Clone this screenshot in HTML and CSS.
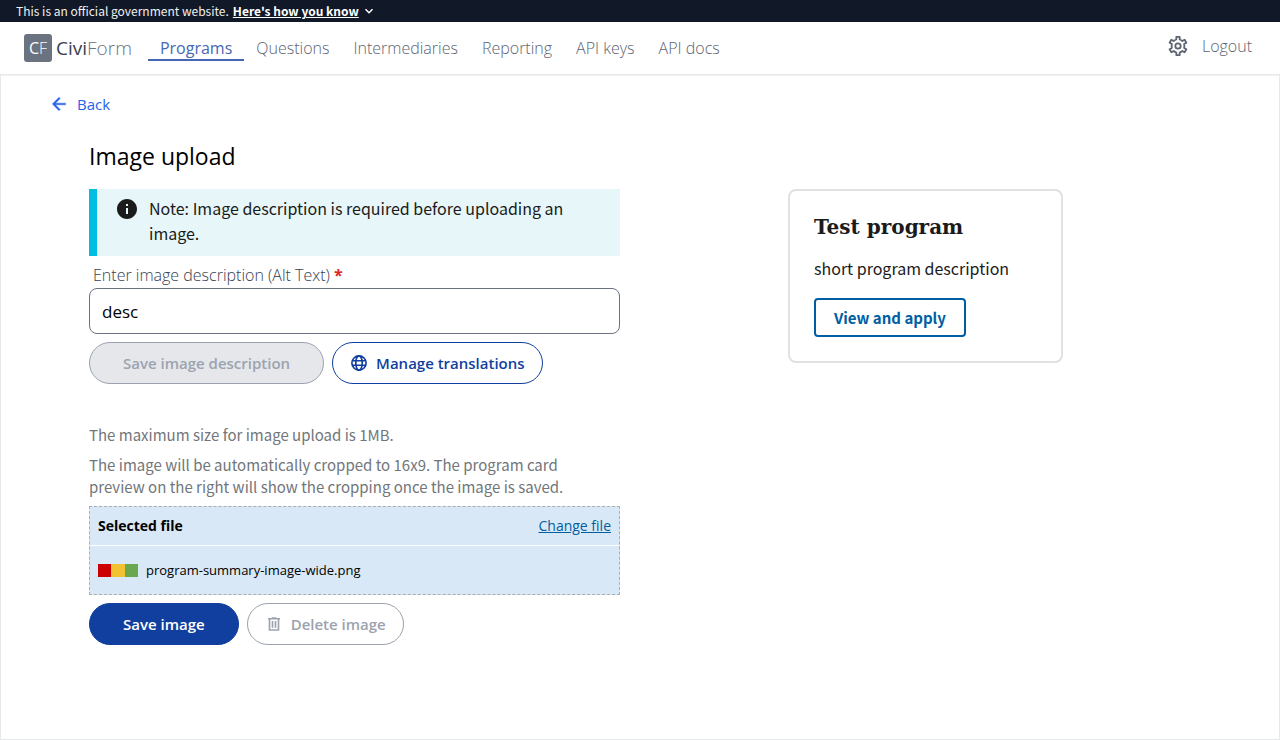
FILE: index.html
```html
<!DOCTYPE html>
<html lang="en">
<head>
<meta charset="utf-8">
<title>Image upload - CiviForm</title>
<link rel="stylesheet" href="styles.css">
</head>
<body>
<div class="gov-banner">
  <span>This is an official government website.</span>
  <button type="button" class="gov-toggle"><span class="gov-toggle-text">Here's how you know</span>
    <svg width="10" height="10" viewBox="0 0 10 10" fill="none" stroke="currentColor" stroke-width="1.500" aria-hidden="true"><path d="M1.500 3.200 5 6.700 8.500 3.200"/></svg>
  </button>
</div>
<header class="site-header">
  <a href="#" class="brand"><span class="brand-mark">C<span class="brand-mark-f">F</span></span><span class="brand-name">Civi<span class="brand-thin">Form</span></span></a>
  <nav class="nav">
    <a href="#" class="nav-link nav-link-current">Programs</a>
    <a href="#" class="nav-link">Questions</a>
    <a href="#" class="nav-link">Intermediaries</a>
    <a href="#" class="nav-link">Reporting</a>
    <a href="#" class="nav-link">API keys</a>
    <a href="#" class="nav-link">API docs</a>
  </nav>
  <div class="account">
    <a href="#" class="settings" aria-label="Settings">
      <svg width="24" height="24" viewBox="0 0 24 24" fill="none" stroke="currentColor" stroke-width="1.800" stroke-linejoin="round" aria-hidden="true"><path d="M10.300 2.900h3.400v2.600a7 7 0 0 1 2.600 1.500l2.300-1.300 1.800 3-2.300 1.300a7 7 0 0 1 0 4l2.300 1.300-1.800 3-2.300-1.300a7 7 0 0 1-2.600 1.500v2.600h-3.400v-2.600A7 7 0 0 1 7.700 17l-2.300 1.300-1.800-3L5.900 14a7 7 0 0 1 0-4L3.600 8.700l1.800-3L7.700 7a7 7 0 0 1 2.600-1.500z"/><circle cx="12" cy="12" r="2.700"/></svg>
    </a>
    <a href="#" class="logout">Logout</a>
  </div>
</header>
<main class="page">
  <a href="#" class="back">
    <svg width="20" height="20" viewBox="0 0 24 24" fill="currentColor" stroke="currentColor" stroke-width=".5" aria-hidden="true"><path d="M20 11H7.830l5.590-5.590L12 4l-8 8 8 8 1.410-1.410L7.830 13H20v-2z"/></svg>
    Back
  </a>
  <h1 class="title">Image upload</h1>
  <div class="columns">
    <section class="editor">
      <div class="note">
        <svg class="note-icon" width="24" height="24" viewBox="0 0 24 24" fill="currentColor" aria-hidden="true"><path d="M12 2C6.480 2 2 6.480 2 12s4.480 10 10 10 10-4.480 10-10S17.520 2 12 2zm1 15h-2v-6h2v6zm0-8h-2V7h2v2z"/></svg>
        <p class="note-text">Note: Image description is required before uploading an image.</p>
      </div>
      <form class="description-form">
        <label class="label" for="alt-text">Enter image description (Alt Text) <span class="required">*</span></label>
        <input class="input" id="alt-text" type="text" value="desc">
        <div class="actions">
          <button type="button" class="button button-disabled" disabled>Save image description</button>
          <button type="button" class="button button-outline">
            <svg width="18" height="18" viewBox="0 0 24 24" fill="none" stroke="currentColor" stroke-width="2.200" aria-hidden="true"><circle cx="12" cy="12" r="9.500"/><ellipse cx="12" cy="12" rx="4.300" ry="9.500"/><path d="M3 9h18M3 15h18"/></svg>
            Manage translations
          </button>
        </div>
      </form>
      <form class="image-form">
        <p class="hint">The maximum size for image upload is 1MB.</p>
        <p class="hint">The image will be automatically cropped to 16x9. The program card preview on the right will show the cropping once the image is saved.</p>
        <div class="file">
          <div class="file-head"><strong class="file-label">Selected file</strong><a href="#" class="change">Change file</a></div>
          <div class="file-row">
            <svg width="40" height="13" viewBox="0 0 40 13" role="img" aria-label="Image preview"><path fill="#cc0000" d="M0 0h13v13H0z"/><path fill="#f1c232" d="M13 0h14v13H13z"/><path fill="#6aa84f" d="M27 0h13v13H27z"/></svg>
            <span>program-summary-image-wide.png</span>
          </div>
        </div>
        <div class="actions">
          <button type="submit" class="button button-primary">Save image</button>
          <button type="button" class="button button-muted" disabled>
            <svg width="18" height="18" viewBox="0 0 24 24" fill="none" stroke="currentColor" stroke-width="2.200" aria-hidden="true"><path d="M4 5h16M9 4h6M6 5v15h12V5M10 8v9M14 8v9"/></svg>
            Delete image
          </button>
        </div>
      </form>
    </section>
    <aside class="preview">
      <article class="card">
        <h2 class="card-title">Test program</h2>
        <p class="card-text">short program description</p>
        <a href="#" class="card-link">View and apply</a>
      </article>
    </aside>
  </div>
</main>
</body>
</html>
```
FILE: styles.css
```css
* { box-sizing: border-box; }

:root {
  --ui: "Open Sans", "Noto Sans", sans-serif;
  --source: "Noto Sans CJK SC", "Noto Sans", sans-serif;
}

body {
  margin: 0;
  min-height: 100vh;
  display: flex;
  flex-direction: column;
  background: #fff;
  color: #000;
  font: 300 16px/24px var(--ui);
}

h1, h2, p { margin: 0; }
a { color: inherit; text-decoration: none; }
button, input { font: inherit; }
svg { flex: none; }

.gov-banner {
  display: flex;
  align-items: center;
  gap: 4px;
  height: 22px;
  padding: 0 16px;
  background: #111827;
  color: #f0f0f0;
  font: 12px/22px var(--source);
}
.gov-toggle {
  display: flex;
  align-items: center;
  gap: 5px;
  padding: 0;
  border: 0;
  background: none;
  color: #fff;
  font-weight: 700;
}
.gov-toggle-text { text-decoration: underline; }

.site-header {
  display: flex;
  align-items: center;
  height: 52px;
  padding: 0 28px 0 24px;
  color: #5c6472;
  box-shadow: 0 1px 2px rgba(0, 0, 0, 0.15);
}
.brand { display: flex; align-items: center; gap: 4px; }
.brand-mark {
  width: 28px;
  height: 28px;
  border-radius: 3px;
  background: #6b7280;
  color: #fff;
  font-size: 16px;
  font-weight: 400;
  line-height: 28px;
  text-align: center;
}
.brand-mark-f { font-weight: 300; }
.brand-name { color: #374151; font-size: 19px; font-weight: 400; }
.brand-thin { color: #6b7280; font-weight: 300; }
.nav { display: flex; padding: 2px 0 0 16px; }
.nav-link { padding: 0 12px; border-bottom: 2px solid transparent; line-height: 22px; }
.nav-link-current { color: #4668b4; border-color: #4668b4; font-weight: 400; }
.account { display: flex; align-items: center; gap: 12px; margin: 0 0 5px auto; }
.settings { display: flex; }

.page {
  flex: 1;
  padding: 17px 88px 48px;
  border: 1px solid #e5e7eb;
}
.back {
  display: flex;
  align-items: center;
  gap: 8px;
  width: max-content;
  margin-left: -40px;
  color: #2563eb;
  font-size: 15px;
  font-weight: 400;
}
.title {
  margin: 22px 0 15px;
  font-size: 23px;
  font-weight: 400;
  line-height: 36px;
}
.columns {
  display: grid;
  grid-template-columns: 1fr 1fr;
  gap: 40px;
  align-items: start;
}

.note {
  display: flex;
  gap: 10px;
  padding: 7px 20px 10px 18px;
  border-left: 8px solid #00bde3;
  background: #e7f6f8;
  color: #1b1b1b;
  font: 16px/25px var(--source);
}
.note-icon { margin-top: 1px; }
.note-text { max-width: 440px; }
.label { display: block; padding: 7px 4px 1px; color: #374151; }
.required { color: #dc2626; font-weight: 700; }
.input {
  display: block;
  width: 100%;
  height: 46px;
  padding: 8px 12px;
  border: 1px solid #6b7280;
  border-radius: 8px;
  background: #fff;
  font-size: 17px;
  font-weight: 400;
}
.actions { display: flex; gap: 8px; margin-top: 8px; }
.button {
  display: flex;
  align-items: center;
  gap: 8px;
  height: 42px;
  padding: 0 33px;
  border: 1px solid;
  border-radius: 21px;
  font-size: 15px;
  font-weight: 600;
}
.button-disabled { background: #e5e7eb; border-color: #9ca3af; color: #9ca3af; }
.button-outline { padding: 0 17px; background: #fff; border-color: #113f9f; color: #113f9f; }
.button-primary { background: #113f9f; border-color: #113f9f; color: #fff; }
.button-muted { padding: 0 17px; background: #fff; border-color: #9ca3af; color: #9ca3af; }

.image-form { margin-top: 40px; }
.hint {
  max-width: 510px;
  margin-bottom: 8px;
  color: #71767a;
  font: 15px/22px var(--source);
}
.file {
  border: 1px dashed #a9aeb1;
  background: #d9e8f6;
  font-size: 14px;
  font-weight: 400;
}
.file-head {
  display: flex;
  justify-content: space-between;
  padding: 7px 8px;
  border-bottom: 1px solid #fff;
}
.file-label { font-weight: 700; }
.change { color: #005ea2; text-decoration: underline; }
.file-row {
  display: flex;
  align-items: center;
  gap: 8px;
  height: 48px;
  padding: 0 8px;
  font-size: 13px;
}

.preview { display: flex; justify-content: center; }
.card {
  width: 275px;
  padding: 21px 24px 24px;
  border: 2px solid #dfe1e2;
  border-radius: 8px;
  color: #1b1b1b;
  font: 16px/24px var(--source);
}
.card-title { font: 700 20px/30px "DejaVu Serif", serif; }
.card-text { margin: 14px 0 18px; }
.card-link {
  display: inline-block;
  padding: 0 18px;
  border: 2px solid #005ea2;
  border-radius: 4px;
  color: #005ea2;
  font-size: 15px;
  font-weight: 700;
  line-height: 35px;
}
```
